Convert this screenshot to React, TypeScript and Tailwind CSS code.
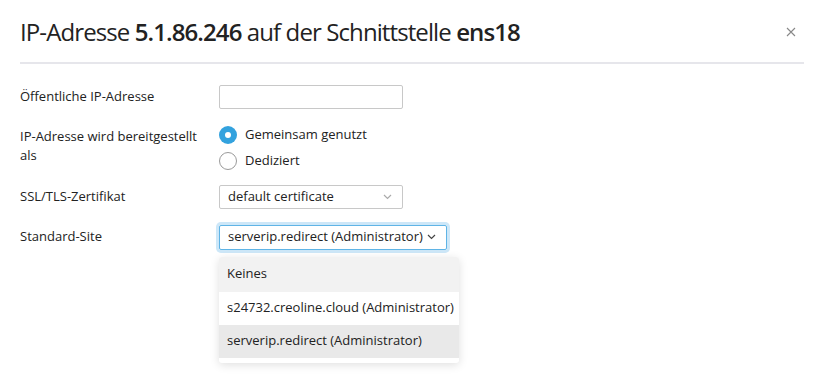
import React from "react";

const font = { fontFamily: '"Open Sans", "Noto Sans", sans-serif' };

function Chevron({ className = "" }: { className?: string }) {
  return (
    <svg width="9" height="6" viewBox="0 0 9 6" className={className}>
      <path d="M1 1 L4.5 4.5 L8 1" fill="none" stroke="currentColor" strokeWidth="1.2" />
    </svg>
  );
}

export default function App() {
  return (
    <div className="w-[817px] h-[391px] bg-white text-[#222] relative overflow-hidden" style={font}>
      <div className="flex items-center justify-between pl-5 pr-[21px] h-[62px]">
        <h1 className="text-[24px] leading-none font-normal tracking-[-0.9px] mt-[2px]">
          IP-Adresse <b className="font-semibold">5.1.86.246</b> auf der Schnittstelle <b className="font-semibold">ens18</b>
        </h1>
        <svg width="10" height="10" viewBox="0 0 10 10" className="text-[#888] mt-[2px]">
          <path d="M1 1 L9 9 M9 1 L1 9" stroke="currentColor" strokeWidth="1.1" />
        </svg>
      </div>
      <div className="ml-5 mr-[13px] h-[2px] bg-[#e6e6eb]" />

      <div className="pl-5 pt-[20px] text-[13px] flex flex-col">
        <div className="flex items-center h-[25px]">
          <div className="w-[199px]">Öffentliche IP-Adresse</div>
          <div className="w-[184px] h-[24px] border border-[#c8c8c8] rounded-[2px]" />
        </div>

        <div className="flex mt-[17px]">
          <div className="w-[199px] leading-[19px] pt-[1px]">
            IP-Adresse wird bereitgestellt
            <br />
            als
          </div>
          <div className="flex flex-col gap-[8px]">
            <div className="flex items-center gap-[8px] h-[18px]">
              <span className="w-[18px] h-[18px] rounded-full bg-[#33a2de] flex items-center justify-center">
                <span className="w-[6px] h-[6px] rounded-full bg-white" />
              </span>
              <span>Gemeinsam genutzt</span>
            </div>
            <div className="flex items-center gap-[8px] h-[18px]">
              <span className="w-[18px] h-[18px] rounded-full border border-[#9a9a9a]" />
              <span>Dediziert</span>
            </div>
          </div>
        </div>

        <div className="flex items-center mt-[15px] h-[24px]">
          <div className="w-[199px]">SSL/TLS-Zertifikat</div>
          <div className="w-[184px] h-[24px] border border-[#c8c8c8] rounded-[2px] flex items-center justify-between pl-[8px] pr-[10px]">
            <span>default certificate</span>
            <Chevron className="text-[#aaa]" />
          </div>
        </div>

        <div className="flex items-center mt-[16px] h-[24px]">
          <div className="w-[199px]">Standard-Site</div>
          <div className="relative">
            <div className="w-[228px] h-[25px] border border-[#5fb4e6] rounded-[2px] shadow-[0_0_0_3px_#cde7f8] flex items-center justify-between pl-[8px] pr-[10px]">
              <span>serverip.redirect (Administrator)</span>
              <Chevron className="text-[#444]" />
            </div>
            <div className="absolute left-0 top-[32px] w-[240px] bg-white rounded-[3px] shadow-[0_2px_10px_rgba(0,0,0,0.13)] pb-[5px] overflow-hidden">
              <div className="h-[35px] bg-[#f2f2f2] flex items-center pl-[8px]">Keines</div>
              <div className="h-[33px] flex items-center pl-[8px]">s24732.creoline.cloud (Administrator)</div>
              <div className="h-[33px] bg-[#e9e9e9] flex items-center pl-[8px]">serverip.redirect (Administrator)</div>
            </div>
          </div>
        </div>
      </div>
    </div>
  );
}
